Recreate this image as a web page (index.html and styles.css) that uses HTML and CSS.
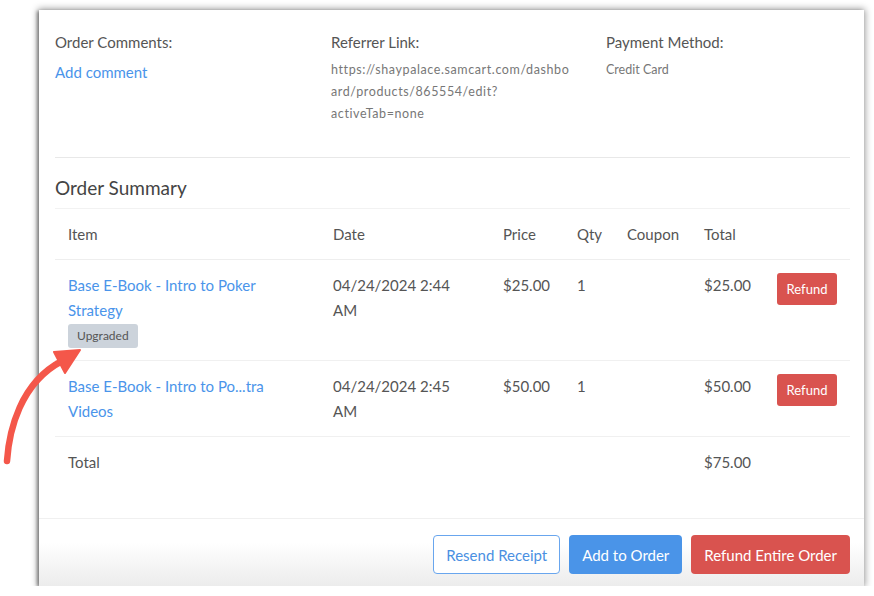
FILE: index.html
```html
<!DOCTYPE html>
<html lang="en">
<head>
    <meta charset="UTF-8">
    <meta name="viewport" content="width=device-width, initial-scale=1.0">
    <title>Order Details</title>
    <link rel="stylesheet" href="styles.css">
</head>
<body>
    <div class="modal">
        <div class="modal-body">
            <div class="details">
                <div class="detail">
                    <h4>Order Comments:</h4>
                    <a href="#" class="link comment-link">Add comment</a>
                </div>
                <div class="detail">
                    <h4>Referrer Link:</h4>
                    <p class="value url">https://shaypalace.samcart.com/dashboard/products/865554/edit?activeTab=none</p>
                </div>
                <div class="detail">
                    <h4>Payment Method:</h4>
                    <p class="value">Credit Card</p>
                </div>
            </div>

            <hr class="divider">

            <h3 class="section-title">Order Summary</h3>

            <table class="summary">
                <colgroup>
                    <col style="width: 265px">
                    <col style="width: 170px">
                    <col style="width: 74px">
                    <col style="width: 50px">
                    <col style="width: 77px">
                    <col style="width: 73px">
                    <col style="width: 86px">
                </colgroup>
                <thead>
                    <tr>
                        <th>Item</th>
                        <th>Date</th>
                        <th>Price</th>
                        <th>Qty</th>
                        <th>Coupon</th>
                        <th>Total</th>
                        <th></th>
                    </tr>
                </thead>
                <tbody>
                    <tr>
                        <td>
                            <a href="#" class="link">Base E-Book - Intro to Poker Strategy</a>
                            <div class="tags"><span class="badge">Upgraded</span></div>
                        </td>
                        <td>04/24/2024 2:44 AM</td>
                        <td>$25.00</td>
                        <td>1</td>
                        <td></td>
                        <td>$25.00</td>
                        <td><button class="btn btn-sm danger">Refund</button></td>
                    </tr>
                    <tr>
                        <td><a href="#" class="link">Base E-Book - Intro to Po...tra Videos</a></td>
                        <td>04/24/2024 2:45 AM</td>
                        <td>$50.00</td>
                        <td>1</td>
                        <td></td>
                        <td>$50.00</td>
                        <td><button class="btn btn-sm danger">Refund</button></td>
                    </tr>
                    <tr class="total-row">
                        <td>Total</td>
                        <td></td>
                        <td></td>
                        <td></td>
                        <td></td>
                        <td>$75.00</td>
                        <td></td>
                    </tr>
                </tbody>
            </table>
        </div>

        <div class="modal-footer">
            <button class="btn outline">Resend Receipt</button>
            <button class="btn primary">Add to Order</button>
            <button class="btn danger">Refund Entire Order</button>
        </div>
    </div>

    <svg class="arrow" width="90" height="130" viewBox="0 0 90 130">
        <path d="M7 120 C9 90 20 42 62 20" fill="none" stroke="#f4574a" stroke-width="6.5" stroke-linecap="round"/>
        <polygon points="54,11 80,9 65,32" fill="#f4574a" stroke="#f4574a" stroke-width="2" stroke-linejoin="round"/>
    </svg>
</body>
</html>
```

FILE: styles.css
```css
* {
    margin: 0;
    padding: 0;
    box-sizing: border-box;
}

body {
    font-family: 'Lato', 'Open Sans', sans-serif;
    background: #fff;
    color: #555;
    position: relative;
    padding: 10px 0 0 39px;
}

.modal {
    width: 825px;
    height: 576px;
    background: #fff;
    display: flex;
    flex-direction: column;
    box-shadow: 0 0 7px 1px rgba(0,0,0,0.4), -2px 1px 3px rgba(0,0,0,0.35);
}

.modal-body {
    flex: 1;
    padding: 22px 14px 0 16px;
}

.details {
    display: grid;
    grid-template-columns: 276px 275px 1fr;
}

.detail h4 {
    font-size: 15px;
    font-weight: 400;
    line-height: 20px;
    color: #555;
    margin-bottom: 7px;
}

.link {
    color: #4a94ea;
    text-decoration: none;
}

.comment-link {
    display: block;
    font-size: 15px;
    line-height: 22px;
    padding-top: 2px;
}

.value {
    font-size: 12.5px;
    line-height: 22px;
    color: #777;
}

.url {
    width: 244px;
    letter-spacing: 0.6px;
    overflow-wrap: anywhere;
}

.divider {
    border: none;
    border-top: 1px solid #e8e8e8;
    margin: 32px 0 17px;
}

.section-title {
    font-size: 19px;
    font-weight: 400;
    line-height: 26px;
    color: #444;
    margin-bottom: 7px;
}

.summary {
    width: 795px;
    border-collapse: collapse;
    table-layout: fixed;
    font-size: 15px;
    line-height: 25px;
}

.summary th,
.summary td {
    text-align: left;
    vertical-align: top;
    font-weight: 400;
    padding: 13px 13px 12px;
}

.summary thead tr {
    border-top: 1px solid #f2f2f2;
    border-bottom: 1px solid #eee;
}

.summary tbody tr {
    border-bottom: 1px solid #f0f0f0;
}

.summary tbody tr.total-row {
    border-bottom: none;
}

.tags {
    display: flex;
    padding-top: 1px;
}

.badge {
    height: 24px;
    line-height: 24px;
    padding: 0 9px;
    font-size: 12px;
    background: #ccd3db;
    color: #555;
    border-radius: 3px;
}

.btn {
    font-family: inherit;
    font-size: 15px;
    height: 39px;
    padding: 0 12px;
    border: 1px solid transparent;
    border-radius: 4px;
    cursor: pointer;
}

.btn.btn-sm {
    display: block;
    width: 60px;
    height: 32px;
    padding: 0;
    font-size: 13px;
    border-radius: 3px;
}

.btn.danger {
    background: #d9534f;
    color: #fff;
}

.btn.primary {
    background: #4a94e8;
    color: #fff;
}

.btn.outline {
    background: #fff;
    color: #4a90e2;
    border-color: #69a6ee;
}

.modal-footer {
    height: 68px;
    border-top: 1px solid #f0f0f0;
    display: flex;
    justify-content: flex-end;
    align-items: flex-start;
    gap: 9px;
    padding: 16px 14px 0;
    background: linear-gradient(to bottom, #fff 0%, #fff 35%, #ececec 100%);
}

.arrow {
    position: absolute;
    left: 0;
    top: 341px;
}
```
